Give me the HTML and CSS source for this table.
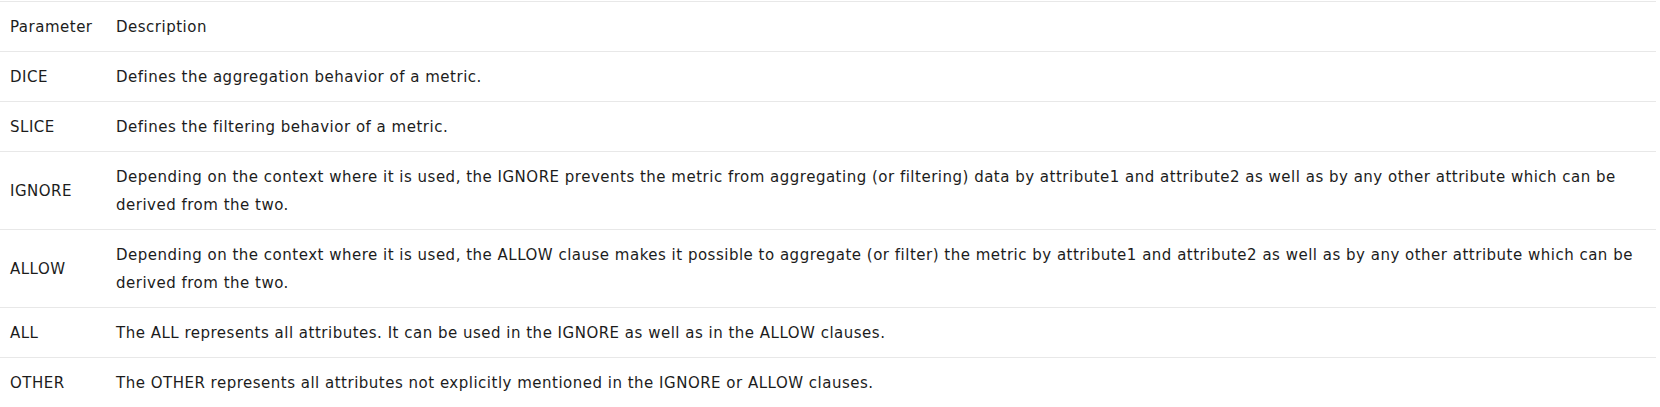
FILE: index.html
```html
<!DOCTYPE html>
<html lang="en">
<head>
<meta charset="utf-8">
<title>Parameters</title>
<link rel="stylesheet" href="styles.css">
</head>
<body>
<table class="params">
  <colgroup>
    <col class="col-name">
    <col class="col-desc">
  </colgroup>
  <thead>
    <tr>
      <th>Parameter</th>
      <th>Description</th>
    </tr>
  </thead>
  <tbody>
    <tr>
      <td>DICE</td>
      <td>Defines the aggregation behavior of a metric.</td>
    </tr>
    <tr>
      <td>SLICE</td>
      <td>Defines the filtering behavior of a metric.</td>
    </tr>
    <tr>
      <td>IGNORE</td>
      <td>Depending on the context where it is used, the IGNORE prevents the metric from aggregating (or filtering) data by attribute1 and attribute2 as well as by any other attribute which can be derived from the two.</td>
    </tr>
    <tr>
      <td>ALLOW</td>
      <td>Depending on the context where it is used, the ALLOW clause makes it possible to aggregate (or filter) the metric by attribute1 and attribute2 as well as by any other attribute which can be derived from the two.</td>
    </tr>
    <tr>
      <td>ALL</td>
      <td>The ALL represents all attributes. It can be used in the IGNORE as well as in the ALLOW clauses.</td>
    </tr>
    <tr>
      <td>OTHER</td>
      <td>The OTHER represents all attributes not explicitly mentioned in the IGNORE or ALLOW clauses.</td>
    </tr>
  </tbody>
</table>
</body>
</html>
```
FILE: styles.css
```css
html, body {
  margin: 0;
  padding: 0;
  background: #ffffff;
}

body {
  font-family: "DejaVu Sans", "Open Sans", sans-serif;
  font-size: 15px;
  letter-spacing: 0.5px;
  color: #1c1c1c;
}

.params {
  width: 1656px;
  margin-top: 1px;
  border-collapse: collapse;
  table-layout: fixed;
}

.col-name {
  width: 106px;
}

.params tr {
  border-top: 1px solid #e8e8e8;
}

.params th,
.params td {
  padding: 11px 4px 10px 10px;
  line-height: 28px;
  text-align: left;
  vertical-align: middle;
  font-weight: 400;
}
```
